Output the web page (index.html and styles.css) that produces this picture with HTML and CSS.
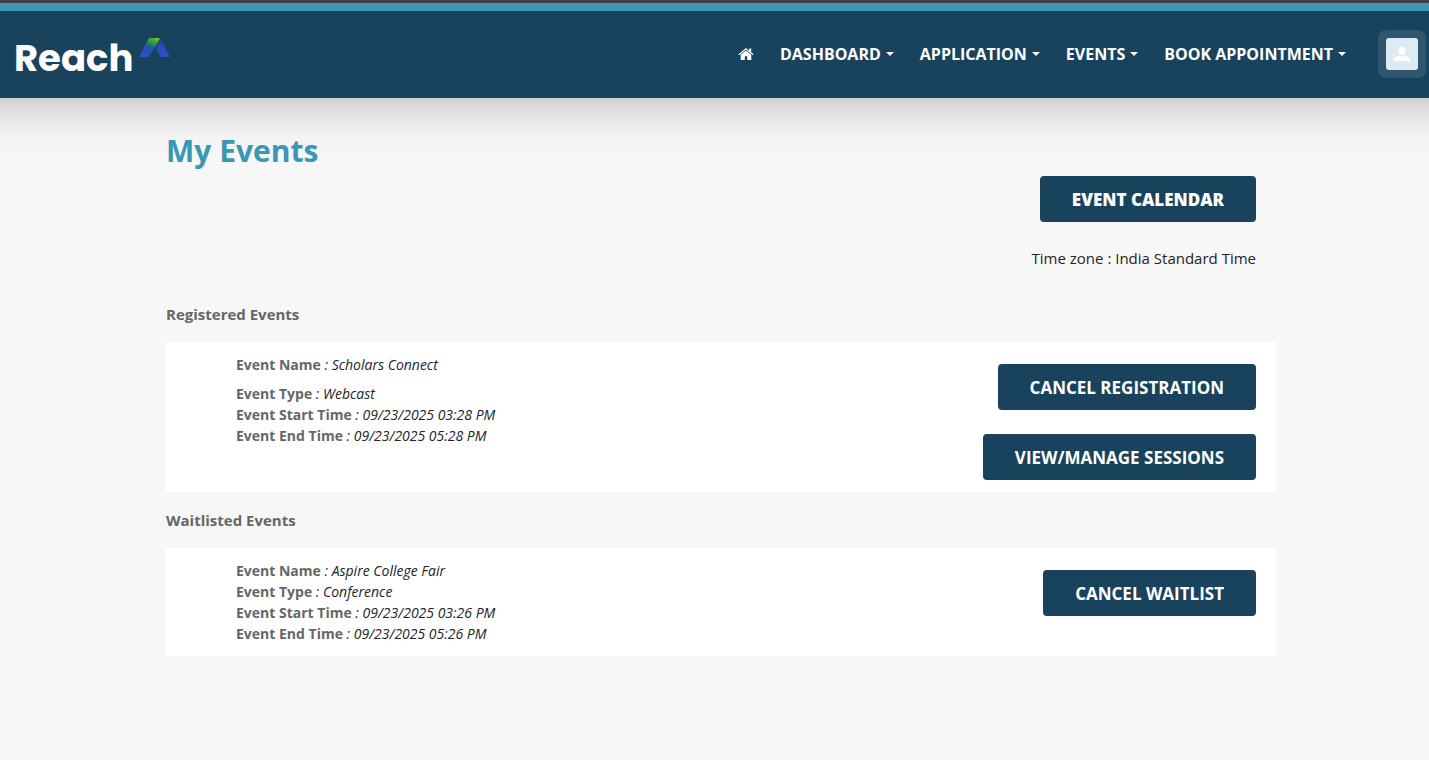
FILE: index.html
```
<!DOCTYPE html>
<html lang="en">
<head>
    <meta charset="utf-8">
    <title>My Events</title>
    <meta name="viewport" content="width=device-width, initial-scale=1">
    <link rel="stylesheet" href="styles.css">
</head>
<body>
    <header class="site-header">
        <a href="#" class="logo">
            <span class="logo-text">Reach</span>
            <svg class="logo-mark" width="32" height="20" viewBox="0 0 32 20" aria-hidden="true">
                <defs>
                    <linearGradient id="markLeft" x1="0.75" y1="0" x2="0.35" y2="1">
                        <stop offset="0" stop-color="#4dbb1c"/>
                        <stop offset="0.25" stop-color="#2f9b35"/>
                        <stop offset="0.5" stop-color="#2651b4"/>
                        <stop offset="1" stop-color="#2853c4"/>
                    </linearGradient>
                    <linearGradient id="markRight" x1="0.2" y1="0" x2="0.8" y2="1">
                        <stop offset="0" stop-color="#253a86"/>
                        <stop offset="0.5" stop-color="#2851bc"/>
                        <stop offset="1" stop-color="#2853c4"/>
                    </linearGradient>
                </defs>
                <path d="M21 0L31 19H22L16 8.500L19 3.500Z" fill="url(#markRight)"/>
                <path d="M10 0H21L10 19H0Z" fill="url(#markLeft)"/>
                <path d="M15 0H21L18.500 4Z" fill="#8bc926" opacity="0.6"/>
            </svg>
        </a>

        <nav class="main-nav">
            <a href="#" class="nav-home" aria-label="Home">
                <svg width="16" height="14" viewBox="0 0 16 14" fill="#fff" aria-hidden="true">
                    <path d="M8 1L0.500 7.300L1.200 8.200L8 2.600L14.800 8.200L15.500 7.300L13.200 5.300V1.400H11.200V3.700Z"/>
                    <path d="M8 3.400L2.700 7.800V13H6.800V9.300H9.200V13H13.300V7.800Z"/>
                </svg>
            </a>
            <button type="button" class="nav-item">DASHBOARD</button>
            <button type="button" class="nav-item">APPLICATION</button>
            <button type="button" class="nav-item">EVENTS</button>
            <button type="button" class="nav-item">BOOK APPOINTMENT</button>
            <button type="button" class="avatar" aria-label="Account">
                <svg width="32" height="32" viewBox="0 0 32 32" aria-hidden="true">
                    <rect width="32" height="32" rx="3" fill="#deebf5"/>
                    <ellipse cx="16" cy="13" rx="3.500" ry="4" fill="#fff"/>
                    <path d="M8 23V21.500C8 19.500 11 18 13.500 18Q16 19.500 18.500 18C21 18 24 19.500 24 21.500V23Z" fill="#fff"/>
                </svg>
            </button>
        </nav>
    </header>

    <main class="page">
        <div class="container">
            <h1>My Events</h1>
            <div class="page-actions">
                <button type="button" class="btn btn-heavy">EVENT CALENDAR</button>
                <p>Time zone : India Standard Time</p>
            </div>

            <h2>Registered Events</h2>
            <section class="event-card">
                <div class="event-info">
                    <p class="event-name"><b>Event Name</b> : Scholars Connect</p>
                    <p><b>Event Type</b> : Webcast</p>
                    <p><b>Event Start Time</b> : 09/23/2025 03:28 PM</p>
                    <p><b>Event End Time</b> : 09/23/2025 05:28 PM</p>
                </div>
                <div class="event-buttons">
                    <button type="button" class="btn">CANCEL REGISTRATION</button>
                    <button type="button" class="btn">VIEW/MANAGE SESSIONS</button>
                </div>
            </section>

            <h2>Waitlisted Events</h2>
            <section class="event-card">
                <div class="event-info">
                    <p><b>Event Name</b> : Aspire College Fair</p>
                    <p><b>Event Type</b> : Conference</p>
                    <p><b>Event Start Time</b> : 09/23/2025 03:26 PM</p>
                    <p><b>Event End Time</b> : 09/23/2025 05:26 PM</p>
                </div>
                <div class="event-buttons">
                    <button type="button" class="btn">CANCEL WAITLIST</button>
                </div>
            </section>
        </div>
    </main>
</body>
</html>
```
FILE: styles.css
```
* {
    box-sizing: border-box;
}

body {
    margin: 0;
    border-top: 3px solid #3e3e3e;
    background-color: #f7f7f7;
    color: #212529;
    font-family: "Segoe UI", "Open Sans", sans-serif;
    font-size: 15px;
    line-height: 24px;
}

h1,
h2,
p {
    margin: 0;
}

/* header */
.site-header {
    display: flex;
    align-items: center;
    justify-content: space-between;
    padding: 19px 3px 20px 14px;
    border-top: 8px solid #3b97b3;
    background-color: #19435c;
}

.logo {
    display: flex;
    align-items: flex-start;
    gap: 6px;
    padding-top: 8px;
    text-decoration: none;
}

.logo-text {
    color: #fff;
    font-family: Poppins, Inter, sans-serif;
    font-size: 37px;
    font-weight: 700;
    line-height: 40px;
}

.main-nav {
    display: flex;
    align-items: center;
    gap: 26px;
}

.nav-home {
    display: flex;
}

.nav-item {
    display: flex;
    align-items: center;
    gap: 5px;
    padding: 0;
    border: none;
    background: none;
    color: #fff;
    font-family: inherit;
    font-size: 16px;
    font-weight: 700;
    line-height: 24px;
    cursor: pointer;
}

.nav-item::after {
    content: "";
    border-top: 4px solid #fff;
    border-right: 4px solid transparent;
    border-left: 4px solid transparent;
}

.avatar {
    display: flex;
    margin-left: 6px;
    padding: 8px;
    border: none;
    border-radius: 8px;
    background-color: #30556f;
    cursor: pointer;
}

/* content */
.page {
    padding: 32px 0 32px 13px;
    background: linear-gradient(#d2d2d2, #dedede 12px, #ebebeb 26px, #f3f3f3 40px, #f7f7f7 60px);
}

.container {
    max-width: 1110px;
    margin: 0 auto;
}

h1 {
    color: #3b97b3;
    font-size: 30px;
    font-weight: 700;
    line-height: 42px;
}

h2 {
    padding: 16px 0;
    color: #666;
    font-size: 15px;
    font-weight: 700;
    line-height: 24px;
}

.page-actions {
    display: flex;
    flex-direction: column;
    align-items: flex-end;
    gap: 24px;
    padding: 4px 20px 16px 0;
}

.btn {
    height: 46px;
    padding: 0 32px;
    border: none;
    border-radius: 4px;
    background-color: #19435c;
    color: #fff;
    font-family: inherit;
    font-size: 17px;
    font-weight: 700;
    cursor: pointer;
}

.btn-heavy {
    font-weight: 800;
}

.event-card {
    display: flex;
    justify-content: space-between;
    padding: 12px 20px 12px 70px;
    background-color: #fff;
}

.event-info {
    font-size: 14px;
    font-style: italic;
    line-height: 21px;
}

.event-info b {
    color: #666;
    font-style: normal;
}

.event-name {
    margin-bottom: 8px;
}

.event-buttons {
    display: flex;
    flex-direction: column;
    align-items: flex-end;
    gap: 24px;
    padding-top: 10px;
}
```
